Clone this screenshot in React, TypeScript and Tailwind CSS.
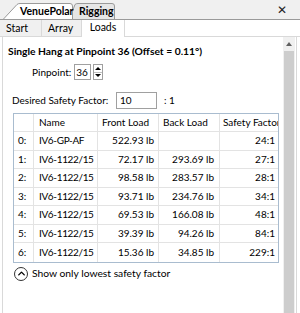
import { ChevronUp } from "lucide-react";

const rows = [
  { i: "0:", name: "IV6-GP-AF", front: "522.93 lb", back: "", sf: "24:1" },
  { i: "1:", name: "IV6-1122/15", front: "72.17 lb", back: "293.69 lb", sf: "27:1" },
  { i: "2:", name: "IV6-1122/15", front: "98.58 lb", back: "283.57 lb", sf: "28:1" },
  { i: "3:", name: "IV6-1122/15", front: "93.71 lb", back: "234.76 lb", sf: "34:1" },
  { i: "4:", name: "IV6-1122/15", front: "69.53 lb", back: "166.08 lb", sf: "48:1" },
  { i: "5:", name: "IV6-1122/15", front: "39.39 lb", back: "94.26 lb", sf: "84:1" },
  { i: "6:", name: "IV6-1122/15", front: "15.36 lb", back: "34.85 lb", sf: "229:1" },
];

function DocTab({ label, active }: { label: string; active?: boolean }) {
  return (
    <div className={`relative h-[16px] flex items-center whitespace-nowrap ${active ? "w-[70px] pl-[17px] z-10" : "w-[46px] -ml-[4px] pl-[10px]"}`}>
      <svg className="absolute inset-0" width="100%" height="16" viewBox={active ? "0 0 70 16" : "0 0 46 16"} preserveAspectRatio="none">
        {active ? (
          <path d="M0.5 16 L14 1.5 Q15 0.5 17 0.5 L67 0.5 Q69.5 0.5 69.5 3 L69.5 16" fill="#ffffff" stroke="#9a9a9a" />
        ) : (
          <path d="M0.5 16 L6 1.5 Q7 0.5 9 0.5 L43 0.5 Q45.5 0.5 45.5 3 L45.5 16" fill="#e6e6e6" stroke="#9a9a9a" />
        )}
      </svg>
      <span className="relative text-[10.5px] font-bold text-black leading-none">{label}</span>
    </div>
  );
}

function InnerTab({ label, w, active }: { label: string; w: string; active?: boolean }) {
  return (
    <div
      className={`flex items-center whitespace-nowrap border-r border-[#d9d9d9] ${w} ${
        active ? "h-[19px] bg-white justify-center" : "h-[17px] bg-[#f0f0f0] border-b pl-[6px]"
      }`}
    >
      <span className="text-[10.5px] text-black leading-none">{label}</span>
    </div>
  );
}

export default function App() {
  const font = { fontFamily: 'Lato, "Noto Sans", sans-serif' };
  return (
    <div className="w-[300px] h-[313px] bg-white overflow-hidden flex flex-col text-black whitespace-nowrap text-[10px]" style={font}>
      {/* document tab strip */}
      <div className="h-[20px] bg-[#f0f0f0] flex items-end pl-[3px] border-b border-[#9a9a9a] relative">
        <DocTab label="VenuePolar" active />
        <DocTab label="Rigging" />
        <div className="absolute right-[13px] top-[4px] text-[12px] leading-none text-[#222]">✕</div>
      </div>

      {/* inner tabs */}
      <div className="flex items-end h-[17px] bg-white">
        <InnerTab label="Start" w="w-[42px]" />
        <InnerTab label="Array" w="w-[40px]" />
        <InnerTab label="Loads" w="w-[43px]" active />
        <div className="flex-1 h-[17px] border-b border-[#d9d9d9]" />
      </div>

      {/* panel */}
      <div className="flex-1 flex border-l border-r border-[#d9d9d9] ml-[2px] mr-[3px] min-h-0">
        <div className="flex-1 flex flex-col pl-[5px] pt-[7px] min-w-0">
          <div className="text-[10.3px] font-bold leading-[14px]">Single Hang at Pinpoint 36 (Offset = 0.11°)</div>

          <div className="flex items-center mt-[6px] pl-[24px] h-[16px]">
            <span>Pinpoint:</span>
            <div className="ml-[3px] w-[17px] h-[16px] border border-[#a0a0a0] flex items-center pl-[1px]">36</div>
            <div className="ml-[2px] w-[10px] h-[16px] border border-[#a0a0a0] flex flex-col">
              <div className="flex-1 flex items-center justify-center border-b border-[#c0c0c0]">
                <div className="w-0 h-0 border-l-[3px] border-r-[3px] border-b-[3px] border-l-transparent border-r-transparent border-b-black" />
              </div>
              <div className="flex-1 flex items-center justify-center">
                <div className="w-0 h-0 border-l-[3px] border-r-[3px] border-t-[3px] border-l-transparent border-r-transparent border-t-black" />
              </div>
            </div>
          </div>

          <div className="flex items-center mt-[12px] pl-[4px] h-[16px]">
            <span className="w-[104px]">Desired Safety Factor:</span>
            <div className="w-[41px] h-[17px] border border-[#a0a0a0] flex items-center pl-[3px]">10</div>
            <span className="ml-[7px]">: 1</span>
          </div>

          <div className="mt-[5px] ml-[5px] w-[266px] border border-[#a9bccf]">
            <div className="flex h-[18px] border-b border-[#e3e3e3] items-center">
              <div className="w-[20px] h-full border-r border-[#e3e3e3]" />
              <div className="w-[64px] h-full border-r border-[#e3e3e3] pl-[5px] flex items-center">Name</div>
              <div className="w-[61px] h-full border-r border-[#e3e3e3] pl-[4px] flex items-center">Front Load</div>
              <div className="w-[61px] h-full border-r border-[#e3e3e3] pl-[4px] flex items-center">Back Load</div>
              <div className="flex-1 h-full pl-[3px] flex items-center overflow-hidden">Safety Factor</div>
            </div>
            {rows.map((r) => (
              <div key={r.i} className="flex h-[18.5px] border-b last:border-b-0 border-[#e3e3e3] items-center">
                <div className="w-[20px] h-full border-r border-[#e3e3e3] pl-[4px] flex items-center">{r.i}</div>
                <div className="w-[64px] h-full border-r border-[#e3e3e3] pl-[5px] flex items-center tracking-[-0.35px]">{r.name}</div>
                <div className="w-[61px] h-full border-r border-[#e3e3e3] pr-[4px] flex items-center justify-end">{r.front}</div>
                <div className="w-[61px] h-full border-r border-[#e3e3e3] pr-[5px] flex items-center justify-end">{r.back}</div>
                <div className="flex-1 h-full pr-[3px] flex items-center justify-end">{r.sf}</div>
              </div>
            ))}
          </div>

          <div className="flex items-center mt-[3px] pl-[6px] h-[16px]">
            <div className="w-[14px] h-[14px] rounded-full border border-[#333] flex items-center justify-center">
              <ChevronUp size={11} strokeWidth={3} className="text-black" />
            </div>
            <span className="ml-[4px] text-[10.3px]">Show only lowest safety factor</span>
          </div>
        </div>

        {/* scrollbar */}
        <div className="w-[12px] flex flex-col bg-[#f0f0f0] mr-[1px]">
          <div className="h-[14px] flex items-center justify-center">
            <div className="w-0 h-0 border-l-[3px] border-r-[3px] border-b-[4px] border-l-transparent border-r-transparent border-b-[#606060]" />
          </div>
          <div className="flex-1 mx-[1px] bg-[#cdcdcd]" />
        </div>
      </div>
    </div>
  );
}
